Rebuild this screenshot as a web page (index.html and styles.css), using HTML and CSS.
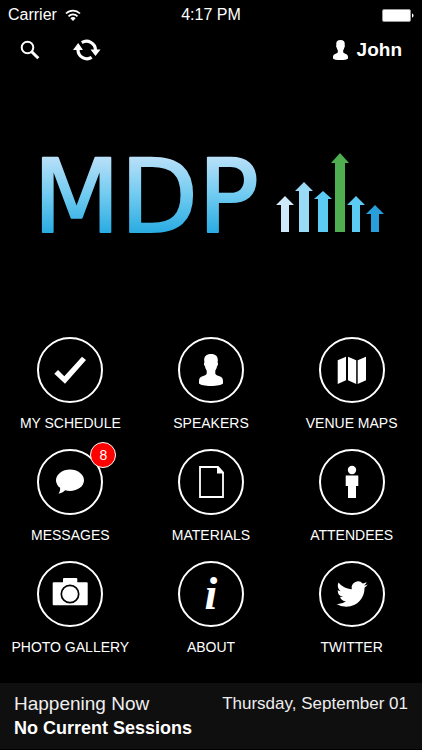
FILE: index.html
```
<!DOCTYPE html>
<html lang="en">
    <head>
        <meta charset="UTF-8" />
        <meta name="viewport" content="width=device-width, initial-scale=1.0" />
        <title>MDP</title>
        <link rel="stylesheet" href="styles.css">
    </head>
    <body>
        <svg class="defs" width="0" height="0" aria-hidden="true">
            <symbol id="person" viewBox="0 0 24 32">
                <path d="M12 0c4.600 0 7 2.300 6.800 6.500l-.2 2c.8.600.5 3-.6 3.700-.3 2-1 3.300-1.700 4.300v3.200c.5 1.300 2.200 1.800 4.200 2.600 2.600 1 3.500 2.200 3.500 5v2.200C22.500 31 18 32 12 32S1.500 31 0 29.500v-2.200c0-2.800.9-4 3.500-5 2-.8 3.700-1.300 4.200-2.600v-3.200c-.7-1-1.400-2.300-1.700-4.300-1.100-.7-1.400-3.100-.6-3.700l-.2-2C5 2.300 7.400 0 12 0z" />
            </symbol>
        </svg>
        <div class="status">
            <div class="carrier">
                <span>Carrier</span>
                <svg class="wifi" viewBox="0 0 16 12">
                    <path d="M1 4.500a10 10 0 0 1 14 0M3.500 7.300a6.400 6.400 0 0 1 9 0" fill="none" stroke="#fff" stroke-width="1.700" />
                    <path d="M8 12L5.300 9.200a3.900 3.900 0 0 1 5.400 0z" fill="#fff" />
                </svg>
            </div>
            <time class="clock">4:17 PM</time>
            <svg class="battery" viewBox="0 0 32 13">
                <rect x="0.500" y="0.500" width="28" height="12" rx="1.500" fill="#fff" stroke="#999" />
                <path d="M30 4.500c2 .5 2 3.500 0 4z" fill="#fff" />
            </svg>
        </div>
        <header class="toolbar">
            <button class="tool" aria-label="Search">
                <svg class="search" viewBox="0 0 20 20">
                    <circle cx="7.500" cy="7.500" r="5.800" fill="none" stroke="#fff" stroke-width="2" />
                    <path d="M11.500 11.500l6.800 6.800" stroke="#fff" stroke-width="3" />
                </svg>
            </button>
            <button class="tool" aria-label="Refresh">
                <svg class="refresh" viewBox="0 0 28 22">
                    <path d="M8.800 3.600a9 9 0 0 1 13.700 7.400M18.700 18.400A9 9 0 0 1 5 11" fill="none" stroke="#fff" stroke-width="3.200" />
                    <path d="M17.500 10.500H27.500l-5 6.500zM0 11h10L5.200 4z" fill="#fff" />
                </svg>
            </button>
            <a class="user" href="#">
                <svg class="user-icon"><use href="#person" /></svg>
                John
            </a>
        </header>
        <main>
            <div class="hero">
                <svg class="logo" viewBox="-16 -22 378 128" role="img" aria-label="MDP">
                    <defs>
                        <linearGradient id="sky" gradientUnits="userSpaceOnUse" x1="0" y1="5" x2="0" y2="80">
                            <stop offset="0" stop-color="#b9e0f8" />
                            <stop offset="0.500" stop-color="#71cbf1" />
                            <stop offset="1" stop-color="#2bace2" />
                        </linearGradient>
                    </defs>
                    <text class="wordmark" x="-5" y="80">MDP</text>
                    <path fill="#cfe9fa" d="M247 44l9 9h-5v27h-8V53h-5z" />
                    <path fill="#99daf7" d="M266 30l9 9h-4v41h-10V39h-4z" />
                    <path fill="#5ccbf4" d="M285 39l9 8h-4v33h-10V47h-4z" />
                    <path fill="#4fae50" d="M302 1l9 10h-4v69h-10V11h-4z" />
                    <path fill="#5ccbf4" d="M318 44l9 9h-5v27h-8V53h-5z" />
                    <path fill="#289fdb" d="M337 53l9 9h-5v18h-8V62h-5z" />
                </svg>
            </div>
            <nav class="menu">
                <a class="tile" href="#">
                    <span class="circle">
                        <svg viewBox="0 0 40 40"><path d="M4.300 23.700L8 20l6.300 6.300L32 6.700l4 3.300L15 33.700z" /></svg>
                    </span>
                    MY SCHEDULE
                </a>
                <a class="tile" href="#">
                    <span class="circle">
                        <svg viewBox="0 0 40 40"><use href="#person" x="8" y="4" width="24" height="32" /></svg>
                    </span>
                    SPEAKERS
                </a>
                <a class="tile" href="#">
                    <span class="circle">
                        <svg viewBox="0 0 40 40">
                            <path d="M5.700 10.300l8.300-3.600v23.600L5.700 34zM16 6.700l8.200 3.600V34L16 30.300zM25.700 10.300L34 6.700v23.600L25.700 34z" />
                        </svg>
                    </span>
                    VENUE MAPS
                </a>
                <a class="tile" href="#">
                    <span class="circle">
                        <svg viewBox="0 0 40 40">
                            <ellipse cx="20" cy="18.300" rx="14" ry="10.700" />
                            <path d="M10 25c.5 3-.2 5-1.500 6.700C12 31 14 29.500 15.500 28z" />
                        </svg>
                        <span class="badge">8</span>
                    </span>
                    MESSAGES
                </a>
                <a class="tile" href="#">
                    <span class="circle">
                        <svg viewBox="0 0 40 40">
                            <path d="M9 5h18l5 5.500V35H9z" fill="none" stroke="#fff" stroke-width="1.800" />
                            <path d="M26 5h1.500L32.500 10v1.500H26z" />
                        </svg>
                    </span>
                    MATERIALS
                </a>
                <a class="tile" href="#">
                    <span class="circle">
                        <svg viewBox="0 0 40 40">
                            <circle cx="20" cy="8" r="4.200" />
                            <path d="M13.700 13.500h12.600V24H24v12h-8V24h-2.300z" />
                        </svg>
                    </span>
                    ATTENDEES
                </a>
                <a class="tile" href="#">
                    <span class="circle">
                        <svg viewBox="0 0 40 40">
                            <path d="M13 8.300V5q0-1 1-1h12.300q1 0 1 1v3.300h9.400q1 0 1 1v21q0 1-1 1H3.700q-1 0-1-1v-21q0-1 1-1z" />
                            <circle cx="20" cy="20" r="8.700" fill="#fff" stroke="#000" stroke-width="1.700" />
                        </svg>
                    </span>
                    PHOTO GALLERY
                </a>
                <a class="tile" href="#">
                    <span class="circle info"><i>i</i></span>
                    ABOUT
                </a>
                <a class="tile" href="#">
                    <span class="circle">
                        <svg viewBox="0 0 40 40">
                            <path transform="translate(4.500 4.500) scale(1.300)" d="M23.950 4.570a10 10 0 0 1-2.820.77 4.960 4.960 0 0 0 2.160-2.720c-.95.550-2 .95-3.130 1.180a4.920 4.920 0 0 0-8.380 4.480C7.690 8.100 4.070 6.130 1.640 3.160a4.820 4.820 0 0 0-.67 2.480c0 1.710.87 3.210 2.190 4.100a4.900 4.900 0 0 1-2.230-.62v.06a4.920 4.920 0 0 0 3.950 4.830 4.960 4.960 0 0 1-2.210.08 4.940 4.940 0 0 0 4.600 3.420A9.870 9.870 0 0 1 0 19.540a14 14 0 0 0 7.550 2.210c9.050 0 14-7.500 14-13.990 0-.21 0-.42-.02-.63a9.940 9.940 0 0 0 2.460-2.550z" />
                        </svg>
                    </span>
                    TWITTER
                </a>
            </nav>
        </main>
        <footer class="now">
            <div>
                <p class="now-label">Happening Now</p>
                <p class="now-session">No Current Sessions</p>
            </div>
            <p class="now-date">Thursday, September 01</p>
        </footer>
    </body>
</html>
```
FILE: styles.css
```
* {
    margin: 0;
    padding: 0;
    box-sizing: border-box;
}

body {
    display: flex;
    flex-direction: column;
    min-height: 100vh;
    background-color: #000;
    color: #fff;
    font-family: 'Liberation Sans', Arial, sans-serif;
}

a {
    color: inherit;
    text-decoration: none;
}

.defs {
    position: absolute;
}

.status {
    display: grid;
    grid-template-columns: 1fr auto 1fr;
    align-items: center;
    height: 30px;
    padding: 0 8px;
    font-size: 16px;
    line-height: 20px;
}

.carrier {
    display: flex;
    align-items: center;
    gap: 8px;
}

.wifi {
    width: 16px;
    height: 12px;
}

.battery {
    justify-self: end;
    width: 32px;
    height: 13px;
}

.toolbar {
    display: flex;
    align-items: center;
    gap: 33px;
    height: 40px;
    padding: 0 20px;
}

.tool {
    display: flex;
    border: none;
    background: none;
    cursor: pointer;
}

.search {
    width: 20px;
    height: 20px;
}

.refresh {
    width: 28px;
    height: 22px;
}

.user {
    display: flex;
    align-items: center;
    gap: 8px;
    margin-left: auto;
    font-size: 19px;
    font-weight: bold;
    line-height: 22px;
}

.user-icon {
    width: 17px;
    height: 20px;
    fill: #fff;
}

main {
    display: flex;
    flex-direction: column;
    flex: 1;
}

.hero {
    display: flex;
    flex: 1;
    justify-content: center;
    align-items: center;
    padding: 20px 16px 40px;
}

.logo {
    width: 100%;
    max-width: 378px;
}

.wordmark {
    font-family: 'DejaVu Sans', sans-serif;
    font-size: 101px;
    fill: url(#sky);
    stroke: url(#sky);
    stroke-width: 2px;
    stroke-linejoin: round;
}

.menu {
    display: grid;
    grid-template-columns: repeat(3, 1fr);
    row-gap: 16px;
    padding-bottom: 26px;
}

.tile {
    display: flex;
    flex-direction: column;
    align-items: center;
    gap: 10px;
    font-size: 14px;
    line-height: 20px;
}

.circle {
    position: relative;
    display: grid;
    place-items: center;
    width: 66px;
    height: 66px;
    border: 2px solid #fff;
    border-radius: 50%;

    svg {
        width: 40px;
        height: 40px;
        fill: #fff;
    }
}

.info {
    font-family: 'Liberation Serif', serif;
    font-size: 46px;
    font-weight: bold;
    line-height: 46px;
}

.badge {
    position: absolute;
    top: -9px;
    right: -15px;
    width: 26px;
    height: 26px;
    border: 1px solid #fff;
    border-radius: 50%;
    background-color: #f00;
    font-size: 14px;
    line-height: 24px;
    text-align: center;
}

.now {
    display: flex;
    justify-content: space-between;
    padding: 8px 14px;
    border-bottom: 1px solid #000;
    background-color: #0f0f0f;
    line-height: 25px;
}

.now-label {
    font-size: 19px;
    color: #eee;
}

.now-session {
    font-size: 18px;
    font-weight: bold;
}

.now-date {
    font-size: 17px;
    color: #eee;
}
```
